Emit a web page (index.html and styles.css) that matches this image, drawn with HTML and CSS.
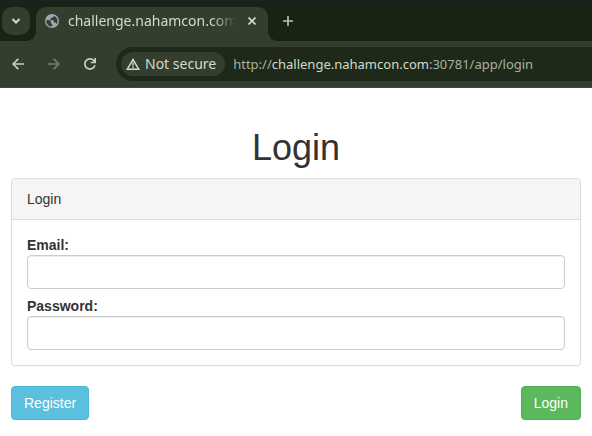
FILE: index.html
```html
<!DOCTYPE html>
<html lang="en">
<head>
<meta charset="utf-8">
<title>Login</title>
<link rel="stylesheet" href="styles.css">
</head>
<body>
<header class="browser">
  <div class="tabstrip">
    <button class="tab-search" type="button" aria-label="Search tabs">
      <svg width="10" height="8" viewBox="0 0 10 8"><path d="M1.500 2 5 5.500 8.500 2" fill="none" stroke="currentColor" stroke-width="2"/></svg>
    </button>
    <div class="tab">
      <svg class="globe" width="14" height="14" viewBox="0 0 14 14"><circle cx="7" cy="7" r="7" fill="#a0a5b0"/><path d="M1.300 6 4.500 6.300 6 8v1.200l1.200 1v2.400C4 12.600 1.500 10.300 1.300 7zM8.700 1.700v1.500H6.400v1.700H4.800v1.300h4v2.200h1.900l.8 1.500C13.300 8.200 12.900 3.300 8.700 1.700z" fill="#333e2e"/></svg>
      <span class="tab-title">challenge.nahamcon.com</span>
      <button class="tab-close" type="button" aria-label="Close tab">
        <svg width="8" height="8" viewBox="0 0 8 8"><path d="M.5.5l7 7M7.500.5l-7 7" stroke="currentColor" stroke-width="1.600"/></svg>
      </button>
    </div>
    <button class="new-tab" type="button" aria-label="New tab">
      <svg width="10" height="10" viewBox="0 0 10 10"><path d="M5 0v10M0 5h10" stroke="currentColor" stroke-width="1.600"/></svg>
    </button>
  </div>
  <div class="toolbar">
    <button class="nav" type="button" aria-label="Back">
      <svg width="12" height="12" viewBox="0 0 12 12"><path d="M12 6H1.200M6.300.8 1.100 6l5.200 5.200" fill="none" stroke="currentColor" stroke-width="1.700"/></svg>
    </button>
    <button class="nav nav-off" type="button" aria-label="Forward">
      <svg width="12" height="12" viewBox="0 0 12 12"><path d="M0 6h10.800M5.700.8 10.900 6l-5.200 5.200" fill="none" stroke="currentColor" stroke-width="1.700"/></svg>
    </button>
    <button class="nav" type="button" aria-label="Reload">
      <svg width="12" height="12" viewBox="0 0 12 12"><path d="M10.900 7.200A5.100 5.100 0 1 1 9.700 2.500L11 4M11.200 0v4.500H6.800" fill="none" stroke="currentColor" stroke-width="1.700"/></svg>
    </button>
    <div class="omnibox">
      <button class="chip" type="button">
        <svg width="14" height="12" viewBox="0 0 14 12"><path d="M7 1.500 12.700 11.200H1.300z" fill="none" stroke="currentColor" stroke-width="1.500"/><path d="M7 4.500v3.200M7 8.600v1.400" stroke="currentColor" stroke-width="1.400"/></svg>
        <span>Not secure</span>
      </button>
      <span class="url">http://<span class="host">challenge.nahamcon.com</span>:30781/app/login</span>
    </div>
  </div>
</header>
<main class="page">
  <h1>Login</h1>
  <form>
    <section class="panel">
      <div class="panel-heading">Login</div>
      <div class="panel-body">
        <div class="field">
          <label for="email">Email:</label>
          <input id="email" type="text">
        </div>
        <div class="field">
          <label for="password">Password:</label>
          <input id="password" type="password">
        </div>
      </div>
    </section>
    <div class="actions">
      <a class="btn btn-info" href="#register">Register</a>
      <button class="btn btn-success" type="submit">Login</button>
    </div>
  </form>
</main>
</body>
</html>
```
FILE: styles.css
```css
* { box-sizing: border-box; }

body {
  margin: 0;
  background: #fff;
  color: #333;
  font: 14px/20px "Liberation Sans", Arial, sans-serif;
}

button { font: inherit; cursor: pointer; }
svg { display: block; flex: none; }

.browser {
  background: #333e2e;
  border-bottom: 1px solid #41493e;
  color: #d5dbcb;
  font-family: "Noto Sans", sans-serif;
  overflow: hidden;
}

.browser button {
  display: flex;
  align-items: center;
  justify-content: center;
  border: 0;
  padding: 0;
  background: none;
  color: inherit;
}

.tabstrip {
  display: flex;
  height: 41px;
  padding: 6px 0 0 2px;
  background: #182314;
  border-top: 1px solid #1c2326;
}

.browser .tab-search {
  width: 28px;
  height: 28px;
  border-radius: 10px;
  background: #333e2e;
}

.tab {
  position: relative;
  display: flex;
  align-items: center;
  width: 232px;
  margin-left: 6px;
  padding: 0 12px 6px 9px;
  border-radius: 10px 10px 0 0;
  background: #333e2e;
}

/* Curved feet that join the tab to the toolbar */
.tab::before,
.tab::after {
  content: "";
  position: absolute;
  bottom: 0;
  width: 10px;
  height: 10px;
}
.tab::before {
  right: 100%;
  background: radial-gradient(circle at 0 0, transparent 10px, #333e2e 10px);
}
.tab::after {
  left: 100%;
  background: radial-gradient(circle at 100% 0, transparent 10px, #333e2e 10px);
}

.tab-title {
  flex: 1;
  min-width: 0;
  margin: 0 12px 0 9px;
  overflow: hidden;
  white-space: nowrap;
  mask-image: linear-gradient(to right, #000 calc(100% - 24px), transparent);
}

.browser .new-tab {
  width: 28px;
  height: 28px;
  margin-left: 6px;
  color: #b9c8ab;
}

.toolbar {
  display: flex;
  align-items: center;
  height: 46px;
  padding: 0 0 0 6px;
}

.browser .nav {
  width: 24px;
  height: 24px;
  margin-right: 12px;
  color: #c4d3b5;
}
.browser .nav-off { color: #76806e; }

.omnibox {
  flex: 1;
  display: flex;
  align-items: center;
  height: 34px;
  margin: 0 -20px 0 2px;
  padding-left: 5px;
  border-radius: 17px;
  background: #1e291a;
  white-space: nowrap;
}

.browser .chip {
  gap: 5px;
  height: 24px;
  padding: 0 9px 0 5px;
  border-radius: 12px;
  background: #333e2e;
}

.url {
  margin-left: 8px;
  color: #a9b1a2;
  font-size: 13px;
}
.host { color: #d5dbcb; }

.page { padding: 40px 11px 16px; }

h1 {
  margin: 0 0 10px;
  font-size: 36px;
  font-weight: 500;
  line-height: 40px;
  text-align: center;
}

.panel {
  margin-bottom: 20px;
  border: 1px solid #ddd;
  border-radius: 4px;
  box-shadow: 0 1px 1px rgba(0, 0, 0, .05);
}

.panel-heading {
  padding: 10px 15px;
  border-bottom: 1px solid #ddd;
  border-radius: 3px 3px 0 0;
  background: #f5f5f5;
}

.panel-body { padding: 15px; }
.field + .field { margin-top: 7px; }

label {
  display: block;
  font-weight: 700;
}

input {
  display: block;
  width: 100%;
  height: 34px;
  padding: 6px 12px;
  border: 1px solid #ccc;
  border-radius: 4px;
  background: #fff;
  box-shadow: inset 0 1px 1px rgba(0, 0, 0, .075);
  color: #555;
  font: inherit;
}

.actions {
  display: flex;
  justify-content: space-between;
}

.btn {
  padding: 6px 12px;
  border: 1px solid;
  border-radius: 4px;
  color: #fff;
  text-decoration: none;
}
.btn-info { border-color: #46b8da; background: #5bc0de; }
.btn-success { border-color: #4cae4c; background: #5cb85c; }
```
